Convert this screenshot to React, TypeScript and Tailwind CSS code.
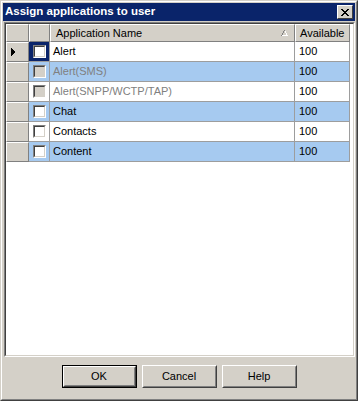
import React from 'react'

const rows = [
   { name: 'Alert', blue: false, disabled: false, current: true },
   { name: 'Alert(SMS)', blue: true, disabled: true, current: false },
   { name: 'Alert(SNPP/WCTP/TAP)', blue: false, disabled: true, current: false },
   { name: 'Chat', blue: true, disabled: false, current: false },
   { name: 'Contacts', blue: false, disabled: false, current: false },
   { name: 'Content', blue: true, disabled: false, current: false },
]

function CheckBox({ disabled }: { disabled: boolean }) {
   return (
      <span className="block w-[13px] h-[13px] border border-t-[#808080] border-l-[#808080] border-b-white border-r-white">
         <span className={`block w-full h-full border border-t-[#404040] border-l-[#404040] border-b-[#d4d0c8] border-r-[#d4d0c8] ${disabled ? 'bg-[#d4d0c8]' : 'bg-white'}`}></span>
      </span>
   )
}

function Button({ label, isDefault }: { label: string; isDefault?: boolean }) {
   return (
      <div className={`w-[75px] h-[23px] bg-[#d4d0c8] ${isDefault ? 'border border-black' : ''}`}>
         <span className="flex w-full h-full border border-t-white border-l-white border-b-[#404040] border-r-[#404040]">
            <span className="flex items-center justify-center w-full h-full border border-t-[#d4d0c8] border-l-[#d4d0c8] border-b-[#808080] border-r-[#808080]">
               {label}
            </span>
         </span>
      </div>
   )
}

export default function App() {
   return (
      <div className="w-[358px] h-[401px] bg-[#d4d0c8] border border-t-[#d4d0c8] border-l-[#d4d0c8] border-b-[#404040] border-r-[#404040] font-[family-name:'Liberation_Sans',Arial,sans-serif] text-[11px] text-black">
         <div className="flex flex-col w-full h-full border border-t-white border-l-white border-b-[#808080] border-r-[#808080] p-[1px]">
            {/* title bar */}
            <div className="flex items-center h-[18px] bg-[#0a246a] pl-[2px] pr-[2px] shrink-0">
               <span className="flex-1 text-white font-bold text-[11.5px] leading-none">Assign applications to user</span>
               <span className="w-[16px] h-[14px] bg-[#d4d0c8] border border-t-white border-l-white border-b-[#404040] border-r-[#404040] flex items-center justify-center">
                  <svg width="8" height="7" viewBox="0 0 8 7" shapeRendering="crispEdges">
                     <path d="M0 0h2v1h-2zM6 0h2v1h-2zM1 1h2v1h-2zM5 1h2v1h-2zM2 2h4v1h-4zM3 3h2v1h-2zM2 4h4v1h-4zM1 5h2v1h-2zM5 5h2v1h-2zM0 6h2v1h-2zM6 6h2v1h-2z" fill="#000" />
                  </svg>
               </span>
            </div>

            {/* grid */}
            <div className="mt-[1px] ml-[1px] h-[335px] border border-t-[#808080] border-l-[#808080] border-b-white border-r-white shrink-0">
               <div className="w-full h-full bg-white border border-t-[#404040] border-l-[#404040] border-b-[#d4d0c8] border-r-[#d4d0c8]">
                  {/* header */}
                  <div className="flex h-[18px]">
                     <div className="w-[23px] bg-[#d4d0c8] border-t border-l border-t-white border-l-white border-r border-b border-r-[#808080] border-b-[#808080]"></div>
                     <div className="w-[21px] bg-[#d4d0c8] border-t border-l border-t-white border-l-white border-r border-b border-r-[#808080] border-b-[#808080]"></div>
                     <div className="w-[245px] flex items-center bg-[#d4d0c8] border-t border-l border-t-white border-l-white border-r border-b border-r-[#808080] border-b-[#808080] pl-[5px] pr-[6px]">
                        <span className="flex-1">Application Name</span>
                        <svg width="7" height="6" viewBox="0 0 7 6" shapeRendering="crispEdges">
                           <path d="M3 0h1v1h-1zM2 1h1v2h-1zM1 3h1v2h-1zM0 5h1v1h-1z" fill="#808080" />
                           <path d="M4 1h1v2h-1zM5 3h1v2h-1zM6 5h1v1h-1zM1 5h5v1h-5z" fill="#ffffff" />
                        </svg>
                     </div>
                     <div className="w-[55px] flex items-center bg-[#d4d0c8] border-t border-l border-t-white border-l-white border-r border-b border-r-[#808080] border-b-[#808080] pl-[4px]">
                        Available
                     </div>
                  </div>

                  {/* rows */}
                  {rows.map((r) => (
                     <div key={r.name} className="flex h-[20px]">
                        <div className="w-[23px] flex items-center pl-[4px] bg-[#d4d0c8] border-t border-l border-t-white border-l-white border-r border-b border-r-[#808080] border-b-[#808080]">
                           {r.current && (
                              <svg width="4" height="8" viewBox="0 0 4 8" shapeRendering="crispEdges">
                                 <path d="M0 0h1v8h-1zM1 1h1v6h-1zM2 2h1v4h-1zM3 3h1v2h-1z" fill="#000" />
                              </svg>
                           )}
                        </div>
                        <div className={`w-[21px] flex items-center justify-center border-r border-b border-r-[#9d9d9d] border-b-[#9d9d9d] ${r.current ? 'bg-[#0a246a]' : r.blue ? 'bg-[#a6caf0]' : 'bg-white'}`}>
                           <CheckBox disabled={r.disabled} />
                        </div>
                        <div className={`w-[245px] flex items-center pl-[3px] border-r border-b border-r-[#9d9d9d] border-b-[#9d9d9d] ${r.blue ? 'bg-[#a6caf0]' : 'bg-white'} ${r.disabled ? 'text-[#808080]' : 'text-black'}`}>
                           {r.name}
                        </div>
                        <div className={`w-[55px] flex items-center pl-[4px] text-black border-r border-b border-r-[#9d9d9d] border-b-[#9d9d9d] ${r.blue ? 'bg-[#a6caf0]' : 'bg-white'}`}>
                           100
                        </div>
                     </div>
                  ))}
               </div>
            </div>

            {/* buttons */}
            <div className="flex justify-center gap-[5px] mt-[8px]">
               <Button label="OK" isDefault />
               <Button label="Cancel" />
               <Button label="Help" />
            </div>
         </div>
      </div>
   )
}
